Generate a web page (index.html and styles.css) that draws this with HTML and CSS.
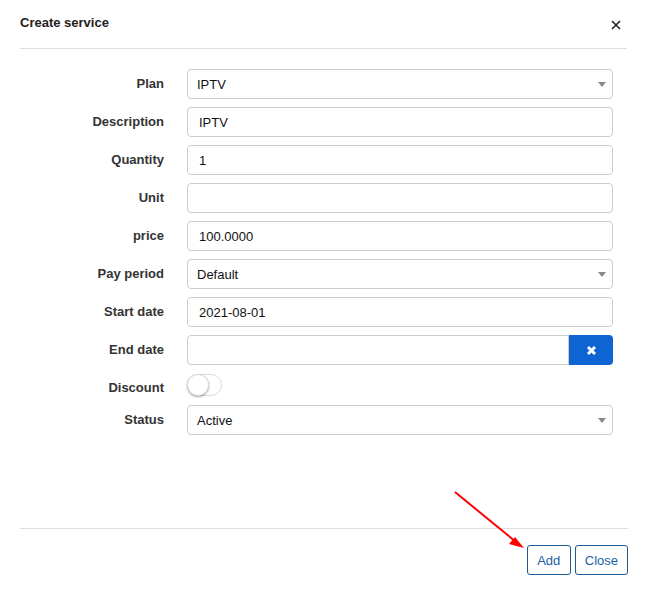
FILE: index.html
```html
<!DOCTYPE html>
<html>
<head>
<meta charset="utf-8">
<link rel="stylesheet" href="styles.css">
</head>
<body>
<div class="modal">
  <div class="modal-header">
    <div class="title">Create service</div>
    <div class="close-x">
      <svg width="10" height="10" viewBox="0 0 10 10"><path d="M1 1L9 9M9 1L1 9" stroke="#222" stroke-width="1.6" fill="none"/></svg>
    </div>
  </div>
  <div class="modal-body">
    <div class="form">
      <label class="lbl">Plan</label>
      <div class="ctrl select"><span>IPTV</span><i class="caret"></i></div>

      <label class="lbl">Description</label>
      <div class="ctrl input">IPTV</div>

      <label class="lbl">Quantity</label>
      <div class="ctrl input">1</div>

      <label class="lbl">Unit</label>
      <div class="ctrl input"></div>

      <label class="lbl">price</label>
      <div class="ctrl input">100.0000</div>

      <label class="lbl">Pay period</label>
      <div class="ctrl select"><span>Default</span><i class="caret"></i></div>

      <label class="lbl">Start date</label>
      <div class="ctrl input">2021-08-01</div>

      <label class="lbl">End date</label>
      <div class="group">
        <div class="ctrl input grow"></div>
        <div class="clear-btn">
          <svg width="11" height="11" viewBox="0 0 11 11"><path d="M2 2L9 9M9 2L2 9" stroke="#fff" stroke-width="3" fill="none"/></svg>
        </div>
      </div>

      <label class="lbl lbl-low">Discount</label>
      <div class="toggle-row"><div class="toggle"><div class="knob"></div></div></div>

      <label class="lbl">Status</label>
      <div class="ctrl select"><span>Active</span><i class="caret"></i></div>
    </div>
  </div>
  <div class="modal-footer">
    <button class="btn">Add</button>
    <button class="btn">Close</button>
  </div>
  <svg class="annot" width="80" height="70" viewBox="0 0 80 70">
    <line x1="3" y1="3" x2="64" y2="53" stroke="#f00" stroke-width="2"/>
    <path d="M72 59L57 55L63 48Z" fill="#f00"/>
  </svg>
</div>
</body>
</html>
```
FILE: styles.css
```css
* { box-sizing: border-box; }
html, body { margin: 0; padding: 0; background: #fff; }
body { font-family: "Liberation Sans", Arial, sans-serif; font-size: 13px; color: #222; }

.modal { position: relative; width: 647px; height: 590px; padding: 0 20px; }

.modal-header {
  height: 49px;
  border-bottom: 1px solid #dedede;
  display: flex;
  justify-content: space-between;
  padding-top: 15px;
}
.title { font-weight: bold; font-size: 13px; line-height: 16px; color: #222; }
.close-x { padding-top: 5px; padding-right: 6px; line-height: 0; }

.modal-body { height: 480px; padding-top: 20px; padding-right: 14px; border-bottom: 1px solid #dedede; margin-right: -1px; }

.form {
  display: grid;
  grid-template-columns: 144px 1fr;
  column-gap: 23px;
  row-gap: 8px;
  align-items: center;
  margin-right: 1px;
}
.lbl { text-align: right; font-weight: bold; color: #333; font-size: 13px; margin-top: -1px; }
.lbl-low { margin-top: 5px; }

.ctrl {
  height: 30px;
  border: 1px solid #cccccc;
  border-radius: 4px;
  background: #fff;
  display: flex;
  align-items: center;
  color: #111;
  font-size: 13px;
}
.input { padding-left: 11px; }
.select { padding-left: 9px; padding-right: 6px; justify-content: space-between; }
.caret {
  width: 0; height: 0;
  border-left: 4px solid transparent;
  border-right: 4px solid transparent;
  border-top: 5px solid #888;
}

.group { display: flex; }
.grow { flex: 1; border-radius: 4px 0 0 4px; }
.clear-btn {
  width: 44px; height: 30px;
  background: #0d64d2;
  border-radius: 0 4px 4px 0;
  display: flex; align-items: center; justify-content: center;
}

.toggle-row { height: 24px; display: flex; align-items: center; }
.toggle {
  width: 35px; height: 22px;
  border: 1px solid #dcdcdc;
  border-radius: 11px;
  position: relative;
  background: #fff;
}
.knob {
  position: absolute; left: -1px; top: -1px;
  width: 22px; height: 22px;
  border-radius: 50%;
  background: #fff;
  border: 1px solid #ddd;
  box-shadow: 0 1px 2px rgba(0,0,0,0.35);
}

.modal-footer { display: flex; justify-content: flex-end; gap: 4px; padding-top: 16px; margin-right: -1px; }
.btn {
  height: 30px;
  min-width: 44px;
  padding: 0 9px;
  font-family: "Liberation Sans", Arial, sans-serif;
  font-size: 13px;
  color: #1b5fa6;
  background: #fff;
  border: 1px solid #1d5a96;
  border-radius: 3px;
}

.annot { position: absolute; left: 452px; top: 489px; }
```
